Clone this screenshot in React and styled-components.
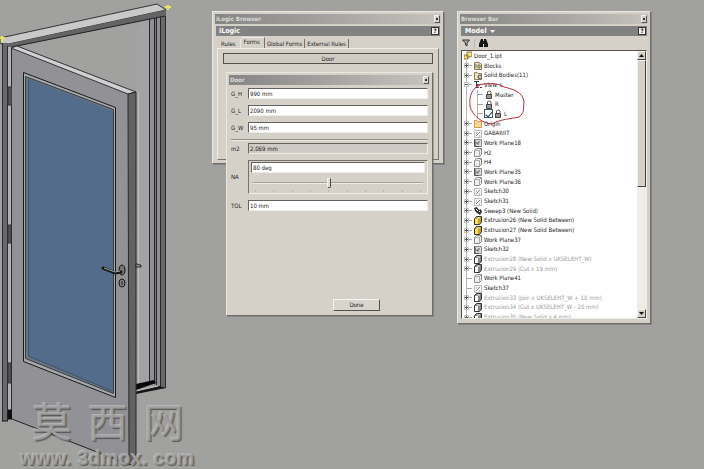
import styled, { createGlobalStyle, css } from "styled-components"
import { useState } from "react"

const GlobalStyle = createGlobalStyle`
  * {
    box-sizing: border-box;
  }
  body {
    margin: 0;
    background-color: #a1a1a0;
  }
  body, button, input {
    font-family: "DejaVu Sans Condensed", "DejaVu Sans", Tahoma, sans-serif;
    font-size: 6px;
    line-height: 8px;
    color: #1c1c1c;
  }
`
const Desktop = styled.main`
  position: relative;
  min-height: 100vh;
  overflow: hidden;
  background-color: #a1a1a0;
`
const Drawing = styled.svg`
  position: absolute;
  left: 0;
  top: 0;
`
const Watermark = styled.div`
  position: absolute;
  left: 20px;
  top: 400px;
  display: flex;
  flex-direction: column;
  color: rgba(160, 160, 160, 0.7);
  text-shadow: -1px -1px 0 rgba(200, 200, 200, 0.6), 1px 1px 1px rgba(70, 70, 70, 0.8);
`
const Characters = styled.div`
  display: flex;
  gap: 16px;
  padding-left: 12px;
  font-family: "Liberation Sans", "Noto Sans CJK SC", sans-serif;
  font-size: 40px;
  line-height: 46px;
`
const Address = styled.div`
  display: flex;
  gap: 6px;
  font-family: "Liberation Sans", Arial, sans-serif;
  font-weight: bold;
  font-size: 20px;
  line-height: 24px;
`

const Window = styled.section`
  position: absolute;
  left: ${({ $x }) => $x}px;
  top: ${({ $y }) => $y}px;
  width: ${({ $w }) => $w}px;
  display: flex;
  flex-direction: column;
  padding: 2px;
  background-color: #d5d1c9;
  border: 1px solid;
  border-color: #e9e7e2 #6f6d69 #6f6d69 #e9e7e2;
  box-shadow: 1px 1px 0 rgba(90, 90, 90, 0.4);
`
const TitleBar = styled.header`
  display: flex;
  align-items: center;
  justify-content: space-between;
  height: 10px;
  padding: 0 1px;
  color: #dcdad6;
  font-weight: bold;
  background: linear-gradient(to right, #858585, #c6c3be);
`
const CloseButton = styled.button`
  display: flex;
  align-items: center;
  justify-content: center;
  width: 6px;
  height: 8px;
  padding: 0;
  background-color: #d5d1c9;
  border: 1px solid;
  border-color: #f4f3f0 #555 #555 #f4f3f0;
`
const PanelHeader = styled.div`
  display: flex;
  align-items: center;
  justify-content: space-between;
  height: 10px;
  margin: 2px 1px 0;
  padding: 0 1px 0 3px;
  color: #fff;
  font-weight: bold;
  font-size: 7px;
  background-color: #828282;
`
const HelpButton = styled.button`
  width: 8px;
  height: 8px;
  padding: 0;
  font-weight: bold;
  line-height: 6px;
  background-color: #f4f3f0;
  border: 1px solid #333;
`
const ModelButton = styled.button`
  display: flex;
  align-items: center;
  gap: 3px;
  padding: 0 0 0 1px;
  color: #fff;
  font-weight: bold;
  font-size: 7px;
  background: none;
  border: 0;
`

const Tabs = styled.div`
  display: flex;
  align-items: flex-end;
  height: 12px;
  padding-left: 2px;
`
const Tab = styled.button`
  height: 9px;
  padding: 0 2px;
  background: none;
  border: 0;
  border-right: 1px solid #77736c;
  ${({ $plain }) => $plain && css`
    padding: 0 4px;
    border-right-color: #eceae5;
  `}
  ${({ $active }) => $active && css`
    height: 11px;
    padding: 0 4px 3px 3px;
    border-top: 1px solid #eceae5;
  `}
`
const TabPanel = styled.div`
  height: 112px;
  margin: 0 2px 1px;
  padding: 4px 5px;
  border: 1px solid;
  border-color: #efede8 #77736c #77736c #efede8;
`
const RuleButton = styled.button`
  display: block;
  width: 100%;
  height: 11px;
  padding: 0;
  background-color: #d0ccc4;
  border: 1px solid #55524d;
`

const Form = styled.form`
  display: flex;
  flex-direction: column;
  gap: 6px;
  height: 228px;
  padding: 3px 2px 2px;
`
const FieldRow = styled.div`
  display: grid;
  grid-template-columns: 17px 1fr;
  align-items: center;
`
const TextBox = styled.input`
  width: 100%;
  min-width: 0;
  height: 11px;
  padding: 0 1px;
  background-color: ${({ readOnly }) => readOnly ? "#d0cac5" : "#fff"};
  border: 1px solid;
  border-color: #66625e #eeece8 #eeece8 #66625e;
  outline: 0;
`
const Separator = styled.hr`
  width: 100%;
  height: 2px;
  margin: 0 0 -4px;
  border: 0;
  border-top: 1px solid #918d87;
  border-bottom: 1px solid #edebe6;
`
const AngleBox = styled.div`
  display: flex;
  flex-direction: column;
  height: 34px;
  padding: 1px 2px;
  border: 1px solid;
  border-color: #77736c #eeece8 #eeece8 #77736c;
`
const Slider = styled.input`
  appearance: none;
  width: 100%;
  height: 14px;
  margin: 3px 0 0;
  padding: 0 2px;
  background: none;
  &::-webkit-slider-runnable-track {
    height: 2px;
    background-color: #a5a19b;
    border-bottom: 1px solid #eeece8;
  }
  &::-webkit-slider-thumb {
    appearance: none;
    width: 4px;
    height: 10px;
    margin-top: -4px;
    background-color: #dedbd5;
    border: 1px solid;
    border-color: #f4f3f0 #444 #444 #f4f3f0;
    border-radius: 0 0 2px 2px;
  }
`
const Ticks = styled.div`
  display: flex;
  justify-content: space-between;
  padding: 0 4px;
`
const Tick = styled.span`
  width: 1px;
  height: 2px;
  background-color: #b9b5ae;
`
const DoneButton = styled.button`
  width: 47px;
  height: 12px;
  margin: auto 0 0 102px;
  padding: 0;
  background-color: #d8d5ce;
  border: 1px solid;
  border-color: #f6f5f2 #55524d #55524d #f6f5f2;
`

const Toolbar = styled.div`
  display: flex;
  align-items: center;
  height: 14px;
  padding: 0 2px;
  gap: 4px;
`
const ToolButton = styled.button`
  display: flex;
  padding: 0;
  background: none;
  border: 0;
`
const ToolDivider = styled.span`
  width: 1px;
  height: 9px;
  background-color: #bcb8b1;
`
const TreeFrame = styled.div`
  position: relative;
  display: grid;
  grid-template-columns: 1fr 9px;
  grid-template-rows: 267px;
  margin: 0 1px 2px;
  overflow: hidden;
  background-color: #fff;
  border: 1px solid;
  border-color: #55524d #eeece8 #eeece8 #55524d;
`
const Tree = styled.ul`
  display: grid;
  grid-auto-rows: 1fr;
  height: 271px;
  margin: 0;
  padding: 0 0 0 2px;
  list-style: none;
`
const TreeRow = styled.li`
  display: flex;
  align-items: center;
  gap: 2px;
  min-height: 0;
  white-space: nowrap;
  color: ${({ $faded }) => $faded ? "#9a9a9a" : "#1c1c1c"};
`
const Branch = styled.span`
  display: flex;
  align-items: center;
  align-self: stretch;
  width: ${({ $wide }) => $wide ? "19px" : "8px"};
  background:
    linear-gradient(#b5b5b5, #b5b5b5) 2px 0 / 1px 100% no-repeat,
    linear-gradient(#a5a5a5, #a5a5a5) ${({ $wide }) => $wide ? "13px" : "2px"} 50% / 6px 1px no-repeat,
    linear-gradient(#b5b5b5, #b5b5b5) ${({ $wide }) => $wide ? "13px" : "2px"} 0 / 1px 100% no-repeat;
`
const Expander = styled.button`
  display: flex;
  padding: 0;
  background-color: #fff;
  border: 0;
`
const TickBox = styled.input`
  appearance: none;
  display: flex;
  justify-content: center;
  width: 9px;
  height: 9px;
  margin: 0 -1px;
  border: 1px solid #3f5c79;
  background-color: #fff;
  &:checked::before {
    content: "";
    width: 3px;
    height: 6px;
    border: solid #22384d;
    border-width: 0 1px 1px 0;
    transform: rotate(40deg);
  }
`
const ScrollBar = styled.div`
  display: flex;
  flex-direction: column;
  background-color: #eeece7;
`
const ScrollButton = styled.button`
  display: flex;
  align-items: center;
  justify-content: center;
  height: 9px;
  padding: 0;
  background-color: #d5d1c9;
  border: 1px solid;
  border-color: #f6f5f2 #444 #444 #f6f5f2;
`
const ScrollThumb = styled.div`
  height: 127px;
  margin-bottom: auto;
  background-color: #d5d1c9;
  border: 1px solid;
  border-color: #f6f5f2 #444 #444 #f6f5f2;
`
const Marker = styled.svg`
  position: absolute;
  left: 4px;
  top: 30px;
  pointer-events: none;
`

function DoorDrawing() {
  return (
    <Drawing width="175" height="469" viewBox="0 0 175 469" aria-hidden="true">
      {/* right jamb */}
      <path d="M136 30L149 18V382L136 384Z" fill="#a3a3a4" />
      <path d="M149 19L166 15V388L160 389L149 382Z" fill="#8f8f94" />
      <path d="M154 18H157V383H154Z" fill="#77777d" />
      <path d="M160 17L166 15V388L160 389Z" fill="#69696a" />
      <path d="M149.500 18V382M154.500 18V384M156.500 17V385M160.500 16V389M165.500 10V388" stroke="#26262b" fill="none" />
      <path d="M138.500 92V383" stroke="#bbbbbb" />
      {/* threshold */}
      <path d="M136 384L154 380L156 383L136 390Z" fill="#080808" />
      <path d="M136 391L159 386L166 388L136 394Z" fill="#151515" />
      <path d="M136 391L158 386" stroke="#c5c5c5" />
      {/* frame head */}
      <path d="M0 38L157 4L166 10L4 45L0 43Z" fill="#c9c9ca" stroke="#333" />
      <path d="M3 45L166 10V16L12 47L8 421H3Z" fill="#646464" />
      <path d="M12 47L165 16" stroke="#222" fill="none" />
      {/* left jamb */}
      <path d="M2 43H8V421H2Z" fill="#69696b" />
      <path d="M8 47H12V410H8Z" fill="#b2b2b5" />
      <path d="M2.500 43V421M7.500 46V421M11.500 48V418" stroke="#2b2b2f" />
      <path d="M2 421H8M8 410H12V419H8Z" stroke="#111" fill="#111" />
      <path d="M8 87H12V105H8ZM8 225H11V243H8ZM8 363H11V383H8Z" fill="#56565b" stroke="#333" />
      {/* leaf */}
      <path d="M12 48L128 94V464L12 419Z" fill="#929296" />
      <path d="M11 48L17 46L136 92L128 94Z" fill="#d0d0d2" stroke="#333" />
      <path d="M128 94L136 92V462L129 465Z" fill="#626263" stroke="#29292b" />
      <path d="M12 419L128 464" stroke="#222" fill="none" />
      {/* glazing */}
      <path d="M23.500 72.500L115.500 107.500V397.500L23.500 361.500Z" fill="#a4a8ab" stroke="#191919" />
      <path d="M25.500 76.500L113.500 109.500V393.500L25.500 358.500Z" fill="#6d747c" stroke="#383d43" />
      <path d="M29 79L113 111V392L29 357Z" fill="#546c8c" />
      <path d="M28.500 79V356L112 391" stroke="#40516a" fill="none" />
      {/* handle and lock */}
      <ellipse cx="122" cy="270" rx="3" ry="5" fill="#777" stroke="#111" />
      <path d="M121 272L115 273L103 268" stroke="#151515" strokeWidth="3" strokeLinecap="round" fill="none" />
      <path d="M120 271L115 272L104 268" stroke="#a4a9ad" fill="none" />
      <ellipse cx="122" cy="283" rx="3" ry="4" fill="#888" stroke="#111" />
      <path d="M122 281V285" stroke="#111" />
      <path d="M136 264H138V265H141V267H136Z" fill="#aaa" stroke="#222" />
      {/* work points */}
      <path d="M0 38H5M2 36V42M165 7H171M168 5V10" stroke="#e6e65a" strokeWidth="2" />
    </Drawing>
  )
}

function Icon({ type }) {
  return (
    <svg width="8" height="9" viewBox="0 0 8 9" fill="none" aria-hidden="true">
      {type === "part" && <path d="M3 1H8V5L6 6H3ZM0 4H4V8H0Z" fill="#f6e585" stroke="#877737" />}
      {type === "blocks" && (
        <>
          <path d="M.5 1.500H5L7.500 3V8.500H.5Z" fill="#eee2ae" stroke="#857c5b" />
          <path d="M2 3V7M4 4H6V7H4Z" stroke="#6c765f" />
        </>
      )}
      {type === "bodies" && (
        <>
          <path d="M.5 1.500H3L4 2.500H7.500V8.500H.5Z" fill="#f3e4b4" stroke="#8c7d5b" />
          <circle cx="6" cy="6" r="2" fill="#c9c5a8" stroke="#555" />
        </>
      )}
      {type === "view" && <path d="M0 1.500H5M2.500 2V8M3 4.500H5M3 7.500H5M6 4.500H8M6 7.500H8" stroke="#444" />}
      {type === "folder" && <path d="M.5 1.500H3L4 2.500H7.500V8.500H.5Z" fill="#f7d795" stroke="#d49b51" />}
      {type === "lock" && (
        <>
          <path d="M2.500 5V2L3.500 1H5L6 2V5" stroke="#555" />
          <path d="M1.500 4.500H6.500V8.500H1.500Z" fill="#999" stroke="#444" />
        </>
      )}
      {type === "sketch" && (
        <>
          <path d="M.5 1.500H7.500V8.500H.5Z" fill="#f6f6f6" stroke="#bbb" />
          <path d="M2 7L6 3M2 4H3M5 7H6" stroke="#888" />
        </>
      )}
      {type === "plane" && (
        <>
          <path d="M2.500 .5H7.500V6.500L5.500 8.500H.5V2.500Z" fill="#efefef" stroke="#888" />
          <path d="M.5 2.500H5.500V8.500M5.500 2.500L7.500 .5" stroke="#aaa" />
        </>
      )}
      {(type === "planeSet" || type === "sketchSet") && (
        <>
          <path d="M1.500 1.500H7.500V8.500H1.500Z" fill="#ddd" stroke="#888" />
          <path d="M.5 1V8.500H5M2 5H4V7M5 3V5" stroke="#555" />
        </>
      )}
      {type === "sweep" && (
        <>
          <path d="M0 2L3 1L5 4L7 3L8 6L6 9L3 7L1 5Z" fill="#333" />
          <path d="M2 3L4 5M5 6L6 5" stroke="#eee" />
        </>
      )}
      {(type === "extrusion" || type === "extrusionOff") && (
        <>
          <path d="M.5 2.500L2.500 .5H7.500V6L5.500 8.500H.5Z" fill={type === "extrusion" ? "#d8a01f" : "#888"} stroke="#333" />
          <path d="M1 3H4V8H1Z" fill={type === "extrusion" ? "#ffe45c" : "#fff"} />
          <path d="M3 2H6" stroke="#eee" />
        </>
      )}
    </svg>
  )
}

const nodes = [
  { label: "Blocks", icon: "blocks", sign: "+" },
  { label: "Solid Bodies(11)", icon: "bodies", sign: "+" },
  { label: "View: L", icon: "view", sign: "-" },
  { label: "Master", icon: "lock", child: true },
  { label: "R", icon: "lock", child: true },
  { label: "L", icon: "lock", child: true, checkbox: true },
  { label: "Origin", icon: "folder", sign: "+" },
  { label: "GABARIIT", icon: "sketch", sign: "+" },
  { label: "Work Plane18", icon: "planeSet", sign: "+" },
  { label: "H2", icon: "plane", sign: "+" },
  { label: "H4", icon: "plane", sign: "+" },
  { label: "Work Plane35", icon: "planeSet", sign: "+" },
  { label: "Work Plane36", icon: "plane", sign: "+" },
  { label: "Sketch30", icon: "sketch", sign: "+" },
  { label: "Sketch31", icon: "sketch", sign: "+" },
  { label: "Sweep3 (New Solid)", icon: "sweep", sign: "+" },
  { label: "Extrusion26 (New Solid Between)", icon: "extrusion", sign: "+" },
  { label: "Extrusion27 (New Solid Between)", icon: "extrusion", sign: "+" },
  { label: "Work Plane37", icon: "plane", sign: "+" },
  { label: "Sketch32", icon: "sketchSet", sign: "+" },
  { label: "Extrusion28 (New Solid x UKSELEHT_W)", icon: "extrusionOff", sign: "+", faded: true },
  { label: "Extrusion29 (Cut x 19 mm)", icon: "extrusionOff", sign: "+", faded: true },
  { label: "Work Plane41", icon: "plane" },
  { label: "Sketch37", icon: "sketch" },
  { label: "Extrusion33 (Join x UKSELEHT_W + 10 mm)", icon: "extrusionOff", sign: "+", faded: true },
  { label: "Extrusion34 (Cut x UKSELEHT_W - 20 mm)", icon: "extrusionOff", sign: "+", faded: true },
  { label: "Extrusion35 (New Solid x 4 mm)", icon: "extrusionOff", sign: "+", faded: true },
]

function TreeNode({ node }) {
  return (
    <TreeRow $faded={node.faded}>
      <Branch $wide={node.child}>
        {node.sign && (
          <Expander aria-label={"Toggle " + node.label}>
            <svg width="5" height="5" viewBox="0 0 5 5">
              <path d="M.5 .5H4.500V4.500H.5Z" fill="#fff" stroke="#bbb" />
              <path d={node.sign === "+" ? "M1 2.500H4M2.500 1V4" : "M1 2.500H4"} stroke="#555" />
            </svg>
          </Expander>
        )}
      </Branch>
      {node.checkbox && <TickBox id="view-l" type="checkbox" defaultChecked />}
      <Icon type={node.icon} />
      {node.checkbox ? <label htmlFor="view-l">{node.label}</label> : <span>{node.label}</span>}
    </TreeRow>
  )
}

function Close() {
  return (
    <CloseButton aria-label="Close">
      <svg width="4" height="4" viewBox="0 0 4 4">
        <path d="M1 1L3 3M3 1L1 3" stroke="#333" />
      </svg>
    </CloseButton>
  )
}

function Arrow({ down, color = "#111" }) {
  return (
    <svg width="5" height="3" viewBox="0 0 5 3">
      <path d={down ? "M0 0H5L2.500 3Z" : "M0 3H5L2.500 0Z"} fill={color} />
    </svg>
  )
}

function Field({ name, value, readOnly }) {
  return (
    <FieldRow>
      <label htmlFor={name}>{name}</label>
      <TextBox id={name} defaultValue={value} readOnly={readOnly} />
    </FieldRow>
  )
}

function ILogicBrowser() {
  return (
    <Window $x={212} $y={11} $w={232}>
      <TitleBar>iLogic Browser<Close /></TitleBar>
      <PanelHeader>iLogic<HelpButton>?</HelpButton></PanelHeader>
      <Tabs>
        <Tab $plain>Rules</Tab>
        <Tab $active>Forms</Tab>
        <Tab>Global Forms</Tab>
        <Tab>External Rules</Tab>
      </Tabs>
      <TabPanel>
        <RuleButton>Door</RuleButton>
      </TabPanel>
    </Window>
  )
}

function DoorForm() {
  const [angle, setAngle] = useState(80)

  return (
    <Window $x={226} $y={72} $w={207}>
      <TitleBar>Door<Close /></TitleBar>
      <Form onSubmit={(e) => e.preventDefault()}>
        <Field name="G_H" value="990 mm" />
        <Field name="G_L" value="2090 mm" />
        <Field name="G_W" value="95 mm" />
        <Separator />
        <Field name="m2" value="2.069 mm" readOnly />
        <FieldRow>
          <label htmlFor="NA">NA</label>
          <AngleBox>
            <TextBox id="NA" value={angle + " deg"} onChange={(e) => setAngle(parseInt(e.target.value) || 0)} />
            <Slider type="range" aria-label="NA angle" min="0" max="180" value={angle} onChange={(e) => setAngle(Number(e.target.value))} />
            <Ticks>
              {[0, 1, 2, 3, 4, 5, 6, 7, 8, 9].map((n) => <Tick key={n} />)}
            </Ticks>
          </AngleBox>
        </FieldRow>
        <Field name="TOL" value="10 mm" />
        <DoneButton type="submit">Done</DoneButton>
      </Form>
    </Window>
  )
}

function BrowserBar() {
  return (
    <Window $x={457} $y={11} $w={194}>
      <TitleBar>Browser Bar<Close /></TitleBar>
      <PanelHeader>
        <ModelButton>Model <Arrow down color="#fff" /></ModelButton>
        <HelpButton>?</HelpButton>
      </PanelHeader>
      <Toolbar>
        <ToolButton aria-label="Filter">
          <svg width="8" height="8" viewBox="0 0 8 8">
            <path d="M.5 1H7.500L5 4V7L3.500 6V4Z" fill="#aaa" stroke="#333" />
          </svg>
        </ToolButton>
        <ToolDivider />
        <ToolButton aria-label="Find">
          <svg width="9" height="8" viewBox="0 0 9 8">
            <path d="M2 0H4V2H5V0H7L9 5V8H5V5H4V8H0V5Z" fill="#151515" />
          </svg>
        </ToolButton>
      </Toolbar>
      <TreeFrame>
        <Tree>
          <TreeRow>
            <Icon type="part" />
            <span>Door_1.ipt</span>
          </TreeRow>
          {nodes.map((node) => <TreeNode key={node.label + node.icon} node={node} />)}
        </Tree>
        <ScrollBar>
          <ScrollButton aria-label="Scroll up"><Arrow /></ScrollButton>
          <ScrollThumb />
          <ScrollButton aria-label="Scroll down"><Arrow down /></ScrollButton>
        </ScrollBar>
        <Marker width="62" height="46" viewBox="0 0 62 46" fill="none" aria-hidden="true">
          <path d="M10 5C18 2 31 1 38 6C47 8 57 11 58 21C57 29 59 31 53 36C44 38 35 38 26 43C18 43 6 35 4 25C3 15 6 7 14 4" stroke="#b52f41" strokeWidth="1" />
        </Marker>
      </TreeFrame>
    </Window>
  )
}

export default function App() {
  return (
    <Desktop>
      <GlobalStyle />
      <DoorDrawing />
      <Watermark>
        <Characters>
          <span>莫</span>
          <span>西</span>
          <span>网</span>
        </Characters>
        <Address>
          <span>www.</span>
          <span>3dmox.</span>
          <span>com</span>
        </Address>
      </Watermark>
      <ILogicBrowser />
      <DoorForm />
      <BrowserBar />
    </Desktop>
  )
}
